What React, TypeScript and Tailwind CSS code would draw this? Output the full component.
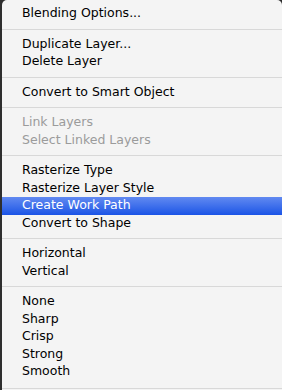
const sections: { label: string; disabled?: boolean; active?: boolean }[][] = [
  [{ label: "Blending Options..." }],
  [{ label: "Duplicate Layer..." }, { label: "Delete Layer" }],
  [{ label: "Convert to Smart Object" }],
  [
    { label: "Link Layers", disabled: true },
    { label: "Select Linked Layers", disabled: true },
  ],
  [
    { label: "Rasterize Type" },
    { label: "Rasterize Layer Style" },
    { label: "Create Work Path", active: true },
    { label: "Convert to Shape" },
  ],
  [{ label: "Horizontal" }, { label: "Vertical" }],
  [
    { label: "None" },
    { label: "Sharp" },
    { label: "Crisp" },
    { label: "Strong" },
    { label: "Smooth" },
  ],
];

export default function App() {
  return (
    <div className="w-[282px] h-[390px] bg-[#2e2e2e] overflow-hidden">
      <div
        className="ml-[2px] w-[280px] h-[390px] bg-[#f4f4f4] rounded-t-[5px] overflow-hidden pt-[5px] flex flex-col"
        style={{ fontFamily: '"DejaVu Sans", "Liberation Sans", sans-serif' }}
      >
        {sections.map((items, si) => (
          <div key={si} className="flex flex-col">
            {items.map((it) => (
              <div
                key={it.label}
                className={
                  it.active
                    ? "h-[17.5px] flex items-center pl-[20px] text-[12.5px] text-white bg-gradient-to-b from-[#6189f0] to-[#1a53e6]"
                    : it.disabled
                      ? "h-[17.5px] flex items-center pl-[20px] text-[12.5px] text-[#9b9b9b]"
                      : "h-[17.5px] flex items-center pl-[20px] text-[12.5px] text-black"
                }
              >
                {it.label}
              </div>
            ))}
            <div
              className={
                si === sections.length - 1
                  ? "mt-[7.5px] h-px bg-[#d8d8d8]"
                  : "my-[6px] h-px bg-[#d8d8d8]"
              }
            />
          </div>
        ))}
      </div>
    </div>
  );
}
